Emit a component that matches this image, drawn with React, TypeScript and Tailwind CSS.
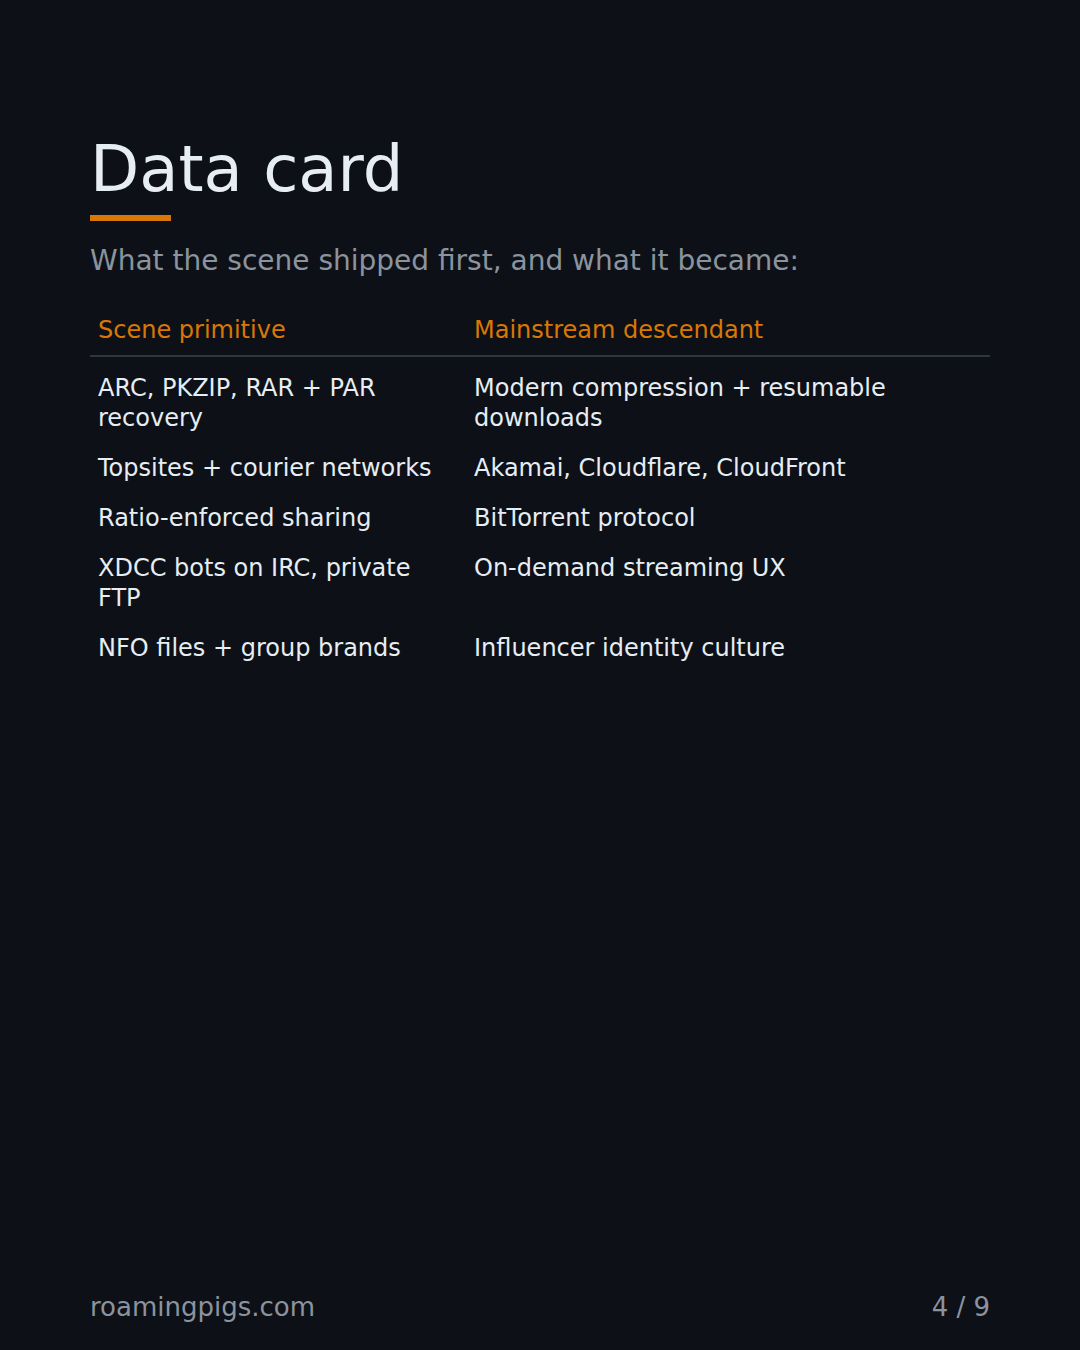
import React from 'react';

// Scene primitives and what the mainstream turned them into
const rows = [
    { primitive: 'ARC, PKZIP, RAR + PAR recovery', descendant: 'Modern compression + resumable downloads' },
    { primitive: 'Topsites + courier networks', descendant: 'Akamai, Cloudflare, CloudFront' },
    { primitive: 'Ratio-enforced sharing', descendant: 'BitTorrent protocol' },
    { primitive: 'XDCC bots on IRC, private FTP', descendant: 'On-demand streaming UX' },
    { primitive: 'NFO files + group brands', descendant: 'Influencer identity culture' },
];

const App: React.FC = () => {
    return (
        <div className="flex flex-col min-h-[1350px] w-[1080px] bg-[#0d1117] px-[90px] font-['DejaVu_Sans',sans-serif]">
            {/* Title */}
            <h1 className="pt-[137px] text-[64px] leading-none text-[#e6edf3]">Data card</h1>
            <div className="mt-[14px] w-[81px] h-[6px] bg-[#d97706]" />

            {/* Subtitle */}
            <p className="mt-[23px] text-[28px] leading-[1.2] text-[#8b949e]">
                What the scene shipped first, and what it became:
            </p>

            {/* Table */}
            <div className="mt-[27px] w-[900px]">
                <div className="grid grid-cols-[376px_1fr] border-b-2 border-[#30363d] text-[24px] leading-[30px] text-[#d97706]">
                    <div className="px-[8px] py-[10px]">Scene primitive</div>
                    <div className="px-[8px] py-[10px]">Mainstream descendant</div>
                </div>
                <div className="mt-[6px]">
                    {rows.map((row) => (
                        <div key={row.primitive} className="grid grid-cols-[376px_1fr] text-[24px] leading-[30px] text-[#e6edf3]">
                            <div className="px-[8px] py-[10px]">{row.primitive}</div>
                            <div className="px-[8px] py-[10px]">{row.descendant}</div>
                        </div>
                    ))}
                </div>
            </div>

            {/* Footer */}
            <div className="mt-auto pb-[27px] flex justify-between text-[26px] leading-[1.2] text-[#8b949e]">
                <span>roamingpigs.com</span>
                <span>4 / 9</span>
            </div>
        </div>
    );
};

export default App;
